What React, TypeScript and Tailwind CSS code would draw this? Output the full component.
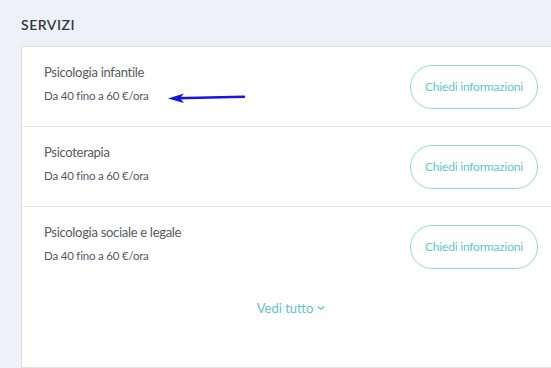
import React from "react";

const services = ["Psicologia infantile", "Psicoterapia", "Psicologia sociale e legale"];

function Row({ title, last, children }: { title: string; last?: boolean; children?: React.ReactNode }) {
  return (
    <div className={`relative flex h-[80px] justify-between px-[22px] ${last ? "" : "border-b border-[#e6e6e6]"}`}>
      <div className="pt-[15px]">
        <div className="text-[13px] leading-[20px] tracking-[-0.3px] text-[#575b60]">{title}</div>
        <div className="mt-[4px] text-[11.5px] leading-[20px] tracking-[-0.2px] text-[#55595e]">Da 40 fino a 60 €/ora</div>
      </div>
      <div className="flex items-center">
        <button className="h-[44px] w-[128px] rounded-full border border-[#8fdcdc] bg-white text-[12px] tracking-[-0.2px] text-[#62c6c6]">
          Chiedi informazioni
        </button>
      </div>
      {children}
    </div>
  );
}

export default function App() {
  return (
    <div
      className="h-[368px] w-[551px] overflow-hidden bg-[#eef2f6] pl-[21px] pt-[18px]"
      style={{ fontFamily: "Lato, 'Open Sans', sans-serif" }}
    >
      <div className="mb-[14px] text-[14px] font-semibold leading-[14px] tracking-[0.5px] text-[#2f3a48]">SERVIZI</div>
      <div className="w-[540px] border border-[#e0e0e0] bg-white">
        {services.map((s, i) => (
          <Row key={s} title={s} last={i === services.length - 1}>
            {i === 0 && (
              <svg className="absolute left-[145px] top-[45px]" width="80" height="12" viewBox="0 0 80 12">
                <path d="M9 6.2 L77 4.8" stroke="#1515e8" strokeWidth="2.4" strokeLinecap="round" fill="none" />
                <path d="M1 6.4 L17 1.5 L13 6.3 L17 11 Z" fill="#1515e8" />
              </svg>
            )}
          </Row>
        ))}
        <div className="flex h-[80px] items-start justify-center pt-[11px]">
          <span className="flex items-center gap-[4px] text-[13px] leading-[20px] text-[#5cc4c4]">
            Vedi tutto
            <svg width="8" height="6" viewBox="0 0 8 6">
              <path d="M1 1.5 L4 4.5 L7 1.5" stroke="#5cc4c4" strokeWidth="1.2" fill="none" />
            </svg>
          </span>
        </div>
      </div>
    </div>
  );
}
